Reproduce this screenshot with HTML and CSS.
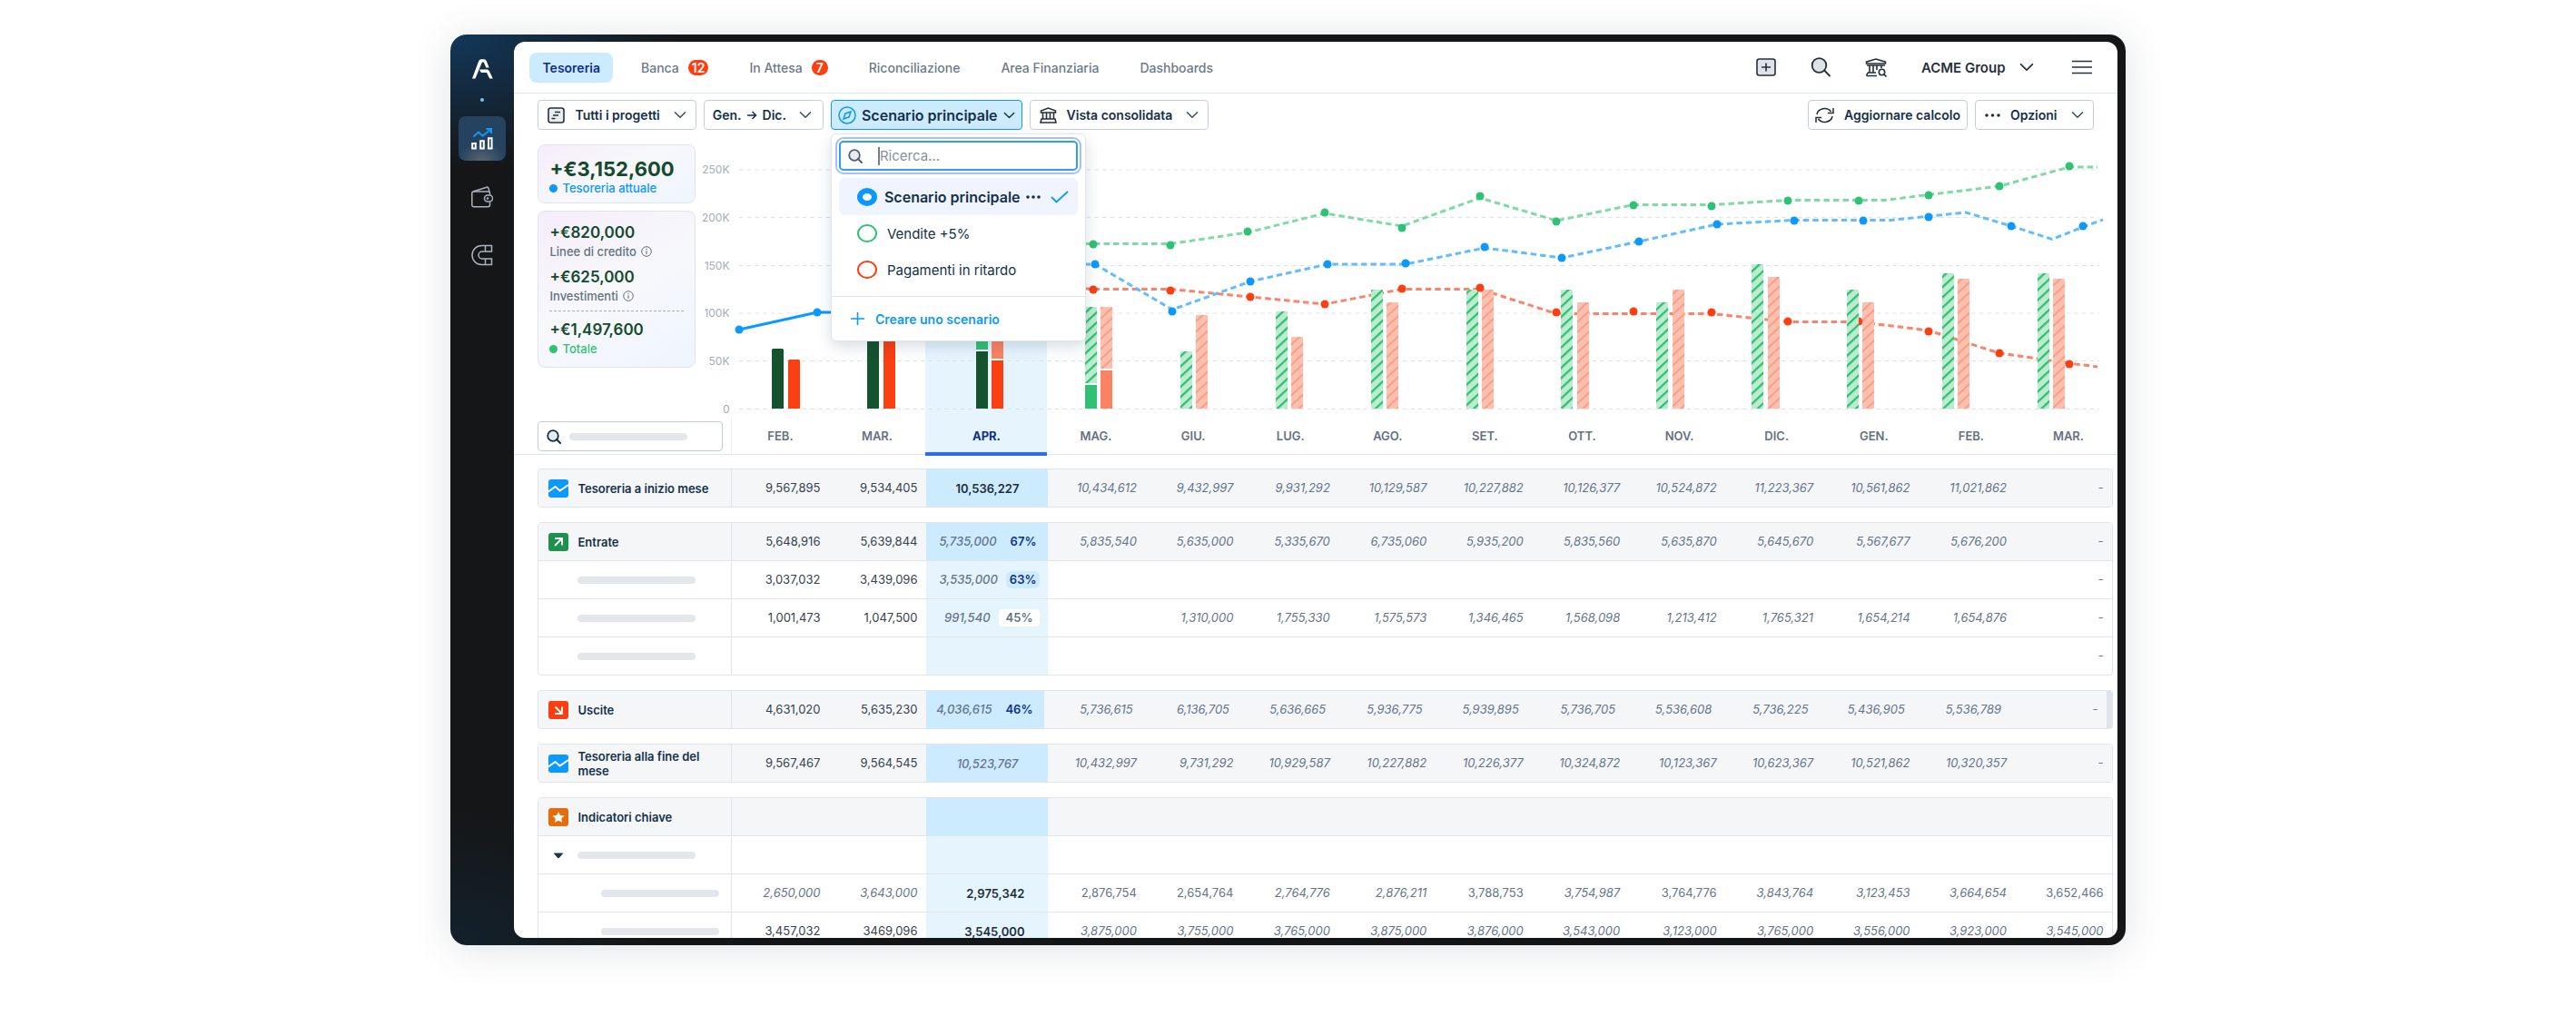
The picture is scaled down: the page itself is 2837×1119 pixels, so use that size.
FILE: index.html
```html
<!DOCTYPE html>
<html lang="it">
<head>
<meta charset="utf-8">
<title>Tesoreria</title>
<link rel="stylesheet" href="styles.css">
</head>
<body>
<svg class="defs" width="0" height="0" aria-hidden="true">
  <defs>
    <symbol id="chevron" viewBox="0 0 15 9"><path d="M1.500 1.500 7.500 7.500l6-6" fill="none" stroke="currentColor" stroke-width="1.600" stroke-linecap="round" stroke-linejoin="round"/></symbol>
    <symbol id="search" viewBox="0 0 22 22"><circle cx="9.500" cy="9" r="7.800" fill="#dfe3e7" stroke="currentColor" stroke-width="1.800"/><path d="M15.200 14.500 21 20.500" stroke="currentColor" stroke-width="1.800" stroke-linecap="round"/></symbol>
    <symbol id="search-small" viewBox="0 0 16 16"><circle cx="7" cy="7" r="5.800" fill="#e8ebee" stroke="currentColor" stroke-width="1.800"/><path d="m11 11 4 4" stroke="currentColor" stroke-width="1.900" stroke-linecap="round"/></symbol>
    <symbol id="info" viewBox="0 0 12 12"><circle cx="6" cy="6" r="5.300" fill="none" stroke="currentColor"/><path d="M6 5.300v3.400M6 3v1" stroke="currentColor" stroke-width="1.200"/></symbol>
    <symbol id="trend" viewBox="0 0 22 20"><rect width="22" height="20" rx="3" fill="#0b98ff"/><path d="M0 13.500 7.500 8l5 4.500L22 6" fill="none" stroke="#fff" stroke-width="2"/></symbol>
  </defs>
</svg>

<div class="device">
  <nav class="sidebar" aria-label="Principale">
    <svg class="logo" viewBox="0 0 23 22" aria-label="Agicap"><path d="M0 21.500 7.200 2.200Q8 .3 10 .3h3q2 0 2.800 1.900L18.600 9.500h-3.300L12.800 3.500h-1.900L3.500 21.500ZM8.200 11.500h8q1.700 0 2.500 1.600l4.100 8.400h-3.600L16 14.900H10.500Q9.300 14.700 8.900 13.700Z" fill="#fff"/></svg>
    <span class="dot"></span>
    <a class="side-item active" href="#" aria-label="Tesoreria">
      <svg viewBox="0 0 24 24" fill="none"><path d="M2.500 9.500 8 4.500l4.500 4.200L21.500 1.500M16.500 1h5.500v5" stroke="#1496ff" stroke-width="2"/><path d="M1.200 17h3.600v5.600H1.200zM10.200 14.200h3.600v8.400h-3.600zM19 11.200h3.600v11.400H19z" stroke="#fff" stroke-width="2"/></svg>
    </a>
    <a class="side-item" href="#" aria-label="Portafoglio">
      <svg viewBox="0 0 24 24" fill="none" stroke="#a9b4be" stroke-width="1.500"><path d="M20.500 9.500V8q0-2-2-2H2.500Q.8 6 .8 8v12.500q0 2.300 2.200 2.300h15.500q2 0 2-2v-3"/><path d="M2 6 17 1.200q1.500-.4 2 1.200L20 6"/><rect x="14.500" y="10" width="9" height="7" rx="3.500"/><circle cx="18" cy="13.500" r=".6"/></svg>
    </a>
    <a class="side-item" href="#" aria-label="Magnete">
      <svg viewBox="0 0 24 24" fill="none" stroke="#a9b4be" stroke-width="1.500"><path d="M22.500 1.500h-11a10.500 10.500 0 0 0 0 21h11v-6.500H12a4 4 0 0 1 0-8h10.500zM15.500 1.500V8M15.500 16v6.500"/></svg>
    </a>
  </nav>

  <main class="screen">
    <header class="topbar">
      <nav class="tabs" aria-label="Sezioni">
        <a class="tab current" href="#">Tesoreria</a>
        <a class="tab" href="#">Banca <span class="count">12</span></a>
        <a class="tab" href="#">In Attesa <span class="count">7</span></a>
        <a class="tab" href="#">Riconciliazione</a>
        <a class="tab" href="#">Area Finanziaria</a>
        <a class="tab" href="#">Dashboards</a>
      </nav>
      <div class="actions">
        <button class="icon-btn" aria-label="Aggiungi"><svg width="22" height="20" viewBox="0 0 22 20"><rect x="1" y="1" width="20" height="18" rx="2.500" fill="#dfe3e7" stroke="currentColor" stroke-width="1.600"/><path d="M11 5.500v9M6 10h10" stroke="currentColor" stroke-width="1.600"/></svg></button>
        <button class="icon-btn" aria-label="Cerca"><svg width="22" height="22"><use href="#search"/></svg></button>
        <button class="icon-btn" aria-label="Banche"><svg width="24" height="21" viewBox="0 0 24 21" fill="none" stroke="currentColor" stroke-width="1.600"><path d="M1.500 6V4.200L12 1l10.500 3.200V6zM2 8h20M5 8v8M9 8v8M13 8v5M18 8v3M3 16h9M1.500 19.500H13M3 16l-1.500 3.500"/><circle cx="18.500" cy="15.500" r="3.200"/><path d="m21 18 2.500 2.500"/></svg></button>
        <button class="account">ACME Group <svg width="16" height="10"><use href="#chevron"/></svg></button>
        <button class="icon-btn" aria-label="Menu"><svg width="22" height="16" viewBox="0 0 22 16"><path d="M0 1.500h22M0 8h22M0 14.500h22" stroke="currentColor" stroke-width="1.600"/></svg></button>
      </div>
    </header>

    <div class="toolbar">
      <button class="btn projects"><svg width="19" height="18" viewBox="0 0 19 18"><rect x="1" y="1" width="17" height="16" rx="2.500" fill="#e9ecef" stroke="#25303b" stroke-width="1.600"/><path d="M8 5.500h6M6 9h6M4.500 12.500h4" stroke="#25303b" stroke-width="1.500"/></svg>Tutti i progetti<svg class="chev" width="14" height="9"><use href="#chevron"/></svg></button>
      <button class="btn period">Gen. <svg width="11" height="10" viewBox="0 0 11 10"><path d="M0 5h9.500M5.500 1l4 4-4 4" fill="none" stroke="currentColor" stroke-width="1.500"/></svg> Dic.<svg class="chev" width="14" height="9"><use href="#chevron"/></svg></button>
      <div class="scenario">
        <button class="btn scenario-btn" aria-expanded="true"><svg width="20" height="20" viewBox="0 0 20 20" fill="none" stroke="#0b98ff" stroke-width="1.500"><circle cx="10" cy="10" r="9"/><path d="m14 6-1.800 5.800L6 14l1.800-5.800z"/></svg>Scenario principale<svg width="13" height="8"><use href="#chevron"/></svg></button>
        <div class="popup">
          <label class="popup-search"><svg width="16" height="16"><use href="#search-small"/></svg><span class="caret"></span><input type="text" placeholder="Ricerca..." aria-label="Ricerca"></label>
          <div class="options">
            <label class="option selected"><input class="blue" type="radio" name="scenario" checked>Scenario principale<svg width="16" height="4" viewBox="0 0 16 4" fill="#143049"><circle cx="2" cy="2" r="1.800"/><circle cx="8" cy="2" r="1.800"/><circle cx="14" cy="2" r="1.800"/></svg><svg class="tick" width="20" height="14" viewBox="0 0 20 14"><path d="m1 7 5.500 5.500L19 1" fill="none" stroke="#0b98ff" stroke-width="1.800"/></svg></label>
            <label class="option"><input class="green" type="radio" name="scenario">Vendite +5%</label>
            <label class="option"><input class="red" type="radio" name="scenario">Pagamenti in ritardo</label>
          </div>
          <button class="create"><svg width="15" height="14" viewBox="0 0 15 14"><path d="M7.500 0v14M0 7h15" stroke="currentColor" stroke-width="1.600"/></svg>Creare uno scenario</button>
        </div>
      </div>
      <button class="btn view"><svg width="19" height="18" viewBox="0 0 19 18" fill="none" stroke="#25303b" stroke-width="1.600"><path d="M1.500 6V4L9.500 1l8 3v2zM3.500 6v7M7.500 6v7M11.500 6v7M15.500 6v7M2 13h15l1 4H1z"/></svg>Vista consolidata<svg class="chev" width="14" height="9"><use href="#chevron"/></svg></button>
      <button class="btn refresh"><svg width="21" height="18" viewBox="0 0 21 18" fill="none" stroke="#25303b" stroke-width="1.500"><path d="M2 8a8.500 7.500 0 0 1 15.500-3M20 1v5.500h-6M19 10a8.500 7.500 0 0 1-15.500 3M1 17v-5.500h6"/></svg>Aggiornare calcolo</button>
      <button class="btn more"><svg width="17" height="4" viewBox="0 0 17 4" fill="#25303b"><circle cx="2" cy="2" r="1.800"/><circle cx="8.500" cy="2" r="1.800"/><circle cx="15" cy="2" r="1.800"/></svg>Opzioni<svg class="chev" width="14" height="9"><use href="#chevron"/></svg></button>
    </div>

    <section class="chart">
      <div class="cards">
        <div class="card">
          <div class="total">+€3,152,600</div>
          <div class="legend blue"><i></i>Tesoreria attuale</div>
        </div>
        <div class="card tall">
          <div class="amount">+€820,000</div>
          <div class="note">Linee di credito <svg width="12" height="12"><use href="#info"/></svg></div>
          <div class="amount next">+€625,000</div>
          <div class="note">Investimenti <svg width="12" height="12"><use href="#info"/></svg></div>
          <hr>
          <div class="amount">+€1,497,600</div>
          <div class="legend green"><i></i>Totale</div>
        </div>
      </div>
      <div class="scale"><span>250K</span><span>200K</span><span>150K</span><span>100K</span><span>50K</span><span>0</span></div>
      <svg class="plot" viewBox="805 143 1526 317" role="img" aria-label="Andamento della tesoreria">
        <defs>
          <pattern id="hatch-green" width="8.200" height="8.200" patternUnits="userSpaceOnUse" patternTransform="rotate(-43)"><rect width="9" height="9" fill="#bdebcf"/><rect width="9" height="2.200" fill="#26c16d"/></pattern>
          <pattern id="hatch-red" width="8.200" height="8.200" patternUnits="userSpaceOnUse" patternTransform="rotate(-43)"><rect width="9" height="9" fill="#fdc0ae"/><rect width="9" height="1.900" fill="#fc9c85"/></pattern>
        </defs>
        <rect x="1019" y="150" width="134" height="310" fill="#e6f4fe"/>
        <path class="grid" d="M814 187H2312M814 239.500H2312M814 292.500H2312M814 345H2312M814 397.500H2312M814 450.500H2312"/>
        <g fill="none" stroke-width="3" stroke-dasharray="6.500 4">
          <path stroke="#fc836a" d="M1100 310 1204 318.500H1289L1377 327 1459 335 1544 318.500H1630L1714 345.500H1885L1969 354.500H2047L2124 364 2202 389 2279 400 2310 404"/>
          <path stroke="#7fdaa5" d="M1100 268.500H1289L1374 256 1459 235 1544 249 1630 218 1714 243 1799 225.500H1885L1969 220.500H2075L2202 205 2279 184H2310"/>
          <path stroke="#62bcff" d="M1100 291H1206L1291 341 1377 310 1462 291H1548L1635 273 1720 284 1805 266 1891 247 1976 242.500H2082L2165 234 2215 249 2260 263.500 2294 250 2316 242"/>
        </g>
        <path d="M814 363 900 344H1000" fill="none" stroke="#0b98ff" stroke-width="3"/>
        <g fill="#0b98ff"><circle cx="814" cy="363" r="4.500"/><circle cx="900" cy="344" r="4.500"/><circle cx="1206" cy="291" r="4.500"/><circle cx="1291" cy="343" r="4.500"/><circle cx="1377" cy="310" r="4.500"/><circle cx="1462" cy="291" r="4.500"/><circle cx="1548" cy="290" r="4.500"/><circle cx="1635" cy="272" r="4.500"/><circle cx="1720" cy="284" r="4.500"/><circle cx="1805" cy="266" r="4.500"/><circle cx="1891" cy="247" r="4.500"/><circle cx="1976" cy="243" r="4.500"/><circle cx="2052" cy="243" r="4.500"/><circle cx="2124" cy="239" r="4.500"/><circle cx="2215" cy="249" r="4.500"/><circle cx="2294" cy="249" r="4.500"/></g>
        <g fill="#30c274"><circle cx="1204" cy="269" r="4.500"/><circle cx="1289" cy="270" r="4.500"/><circle cx="1374" cy="255" r="4.500"/><circle cx="1459" cy="234" r="4.500"/><circle cx="1544" cy="251" r="4.500"/><circle cx="1630" cy="216" r="4.500"/><circle cx="1714" cy="244" r="4.500"/><circle cx="1799" cy="226" r="4.500"/><circle cx="1885" cy="227" r="4.500"/><circle cx="1969" cy="221" r="4.500"/><circle cx="2047" cy="221" r="4.500"/><circle cx="2124" cy="215" r="4.500"/><circle cx="2202" cy="205" r="4.500"/><circle cx="2279" cy="183" r="4.500"/></g>
        <g fill="#fa3f12"><circle cx="1204" cy="319" r="4.500"/><circle cx="1289" cy="320" r="4.500"/><circle cx="1377" cy="327" r="4.500"/><circle cx="1459" cy="335" r="4.500"/><circle cx="1544" cy="318" r="4.500"/><circle cx="1714" cy="344" r="4.500"/><circle cx="1799" cy="343" r="4.500"/><circle cx="1885" cy="344" r="4.500"/><circle cx="1969" cy="354" r="4.500"/><circle cx="2047" cy="354" r="4.500"/><circle cx="2124" cy="365" r="4.500"/><circle cx="2202" cy="389" r="4.500"/></g>
        <g fill="#14532e"><path d="M850 450V385.500q0-1.500 1.500-1.500h10q1.500 0 1.500 1.500V450zM955 360h13v90h-13zM1075 387h13v63h-13z"/></g>
        <g fill="#fa3f12"><path d="M868 450V397.500q0-1.500 1.500-1.500h10q1.500 0 1.500 1.500V450zM973 360h13v90h-13zM1092 397h13v53h-13z"/></g>
        <path fill="#30c274" d="M1075 340h13v45h-13zM1195 424h13v26h-13z"/>
        <path fill="#fb8263" d="M1092 340h13v55h-13zM1212 408h13v42h-13z"/>
        <path fill="#fff" d="M1075 385h13v2h-13zM1092 395h13v2h-13z"/>
        <g fill="url(#hatch-green)"><rect x="1195" y="338" width="13" height="84" rx="1"/><rect x="1300" y="387" width="13" height="63" rx="1"/><rect x="1405" y="343" width="13" height="107" rx="1"/><rect x="1510" y="319" width="13" height="131" rx="1"/><rect x="1615" y="319" width="13" height="131" rx="1"/><rect x="1719" y="319" width="13" height="131" rx="1"/><rect x="1824" y="333" width="13" height="117" rx="1"/><rect x="1929" y="291" width="13" height="159" rx="1"/><rect x="2034" y="319" width="13" height="131" rx="1"/><rect x="2139" y="301" width="13" height="149" rx="1"/><rect x="2244" y="301" width="13" height="149" rx="1"/></g>
        <g fill="url(#hatch-red)"><rect x="1212" y="338" width="13" height="68" rx="1"/><rect x="1317" y="347" width="13" height="103" rx="1"/><rect x="1422" y="371" width="13" height="79" rx="1"/><rect x="1527" y="333" width="13" height="117" rx="1"/><rect x="1632" y="319" width="13" height="131" rx="1"/><rect x="1737" y="333" width="13" height="117" rx="1"/><rect x="1842" y="319" width="13" height="131" rx="1"/><rect x="1947" y="305" width="13" height="145" rx="1"/><rect x="2051" y="333" width="13" height="117" rx="1"/><rect x="2156" y="307" width="13" height="143" rx="1"/><rect x="2261" y="307" width="13" height="143" rx="1"/></g>
        <g fill="#fa3f12"><circle cx="1630" cy="317" r="4.500"/><circle cx="2279" cy="401" r="4.500"/></g>
      </svg>
    </section>

    <div class="months">
      <div class="filter"><label class="filter-box"><svg width="16" height="16"><use href="#search-small"/></svg><span class="bone"></span><input type="search" aria-label="Filtra"></label></div>
      <span class="month first">FEB.</span><span class="month">MAR.</span><span class="month now">APR.</span><span class="month">MAG.</span><span class="month">GIU.</span><span class="month">LUG.</span><span class="month">AGO.</span><span class="month">SET.</span><span class="month">OTT.</span><span class="month">NOV.</span><span class="month">DIC.</span><span class="month">GEN.</span><span class="month">FEB.</span><span class="month">MAR.</span>
    </div>

    <div class="groups">
      <div class="group">
        <table>
          <tr class="head"><th scope="row"><span class="name"><svg width="22" height="20"><use href="#trend"/></svg>Tesoreria a inizio mese</span></th><td>9,567,895</td><td>9,534,405</td><td class="sum">10,536,227</td><td>10,434,612</td><td>9,432,997</td><td>9,931,292</td><td>10,129,587</td><td>10,227,882</td><td>10,126,377</td><td>10,524,872</td><td>11,223,367</td><td>10,561,862</td><td>11,021,862</td><td>-</td></tr>
        </table>
      </div>

      <div class="group">
        <table>
          <tr class="head"><th scope="row"><span class="name"><svg width="22" height="20" viewBox="0 0 22 20"><rect width="22" height="20" rx="3" fill="#1d924f"/><path d="M7 6h8v7.500M14.500 6.500 7 14" fill="none" stroke="#fff" stroke-width="1.800"/></svg>Entrate</span></th><td>5,648,916</td><td>5,639,844</td><td>5,735,000<b class="rate">67%</b></td><td>5,835,540</td><td>5,635,000</td><td>5,335,670</td><td>6,735,060</td><td>5,935,200</td><td>5,835,560</td><td>5,635,870</td><td>5,645,670</td><td>5,567,677</td><td>5,676,200</td><td>-</td></tr>
          <tr><th scope="row"><span class="bone"></span></th><td>3,037,032</td><td>3,439,096</td><td>3,535,000<b class="rate tint">63%</b></td><td></td><td></td><td></td><td></td><td></td><td></td><td></td><td></td><td></td><td></td><td>-</td></tr>
          <tr><th scope="row"><span class="bone"></span></th><td>1,001,473</td><td>1,047,500</td><td>991,540<b class="rate low">45%</b></td><td></td><td>1,310,000</td><td>1,755,330</td><td>1,575,573</td><td>1,346,465</td><td>1,568,098</td><td>1,213,412</td><td>1,765,321</td><td>1,654,214</td><td>1,654,876</td><td>-</td></tr>
          <tr><th scope="row"><span class="bone"></span></th><td></td><td></td><td></td><td></td><td></td><td></td><td></td><td></td><td></td><td></td><td></td><td></td><td></td><td>-</td></tr>
        </table>
      </div>

      <div class="group scrolled">
        <table>
          <tr class="head"><th scope="row"><span class="name"><svg width="22" height="20" viewBox="0 0 22 20"><rect width="22" height="20" rx="3" fill="#fa3f12"/><path d="M7 14h8V6.500M14.500 13.500 7.500 6.500" fill="none" stroke="#fff" stroke-width="1.800"/></svg>Uscite</span></th><td>4,631,020</td><td>5,635,230</td><td>4,036,615<b class="rate">46%</b></td><td>5,736,615</td><td>6,136,705</td><td>5,636,665</td><td>5,936,775</td><td>5,939,895</td><td>5,736,705</td><td>5,536,608</td><td>5,736,225</td><td>5,436,905</td><td>5,536,789</td><td>-</td></tr>
        </table>
      </div>

      <div class="group">
        <table>
          <tr class="head"><th scope="row"><span class="name"><svg width="22" height="20"><use href="#trend"/></svg>Tesoreria alla fine del mese</span></th><td>9,567,467</td><td>9,564,545</td><td class="centered">10,523,767</td><td>10,432,997</td><td>9,731,292</td><td>10,929,587</td><td>10,227,882</td><td>10,226,377</td><td>10,324,872</td><td>10,123,367</td><td>10,623,367</td><td>10,521,862</td><td>10,320,357</td><td>-</td></tr>
        </table>
      </div>

      <div class="group">
        <table>
          <tr class="head"><th scope="row"><span class="name"><svg width="22" height="20" viewBox="0 0 22 20"><rect width="22" height="20" rx="3" fill="#e46c0a"/><path d="m11 4 2 4 4.500.5-3.200 3 .8 4.300L11 13.700l-4.100 2.100.8-4.300-3.200-3L9 8z" fill="#fff"/></svg>Indicatori chiave</span></th><td></td><td></td><td></td><td></td><td></td><td></td><td></td><td></td><td></td><td></td><td></td><td></td><td></td><td></td></tr>
          <tr><th scope="row"><span class="name"><svg width="22" height="20" viewBox="0 0 22 20"><path d="M6.500 7.500h9q.8 0 .3.800l-3.600 4.200q-1.200 1-2.400 0L6.200 8.300q-.5-.8.300-.8z" fill="#163551"/></svg><i class="bone"></i></span></th><td></td><td></td><td></td><td></td><td></td><td></td><td></td><td></td><td></td><td></td><td></td><td></td><td></td><td></td></tr>
          <tr><th scope="row"><span class="bone deep"></span></th><td class="est">2,650,000</td><td class="est">3,643,000</td><td class="sum kpi">2,975,342</td><td class="firm">2,876,754</td><td class="firm">2,654,764</td><td>2,764,776</td><td>2,876,211</td><td class="firm">3,788,753</td><td>3,754,987</td><td class="firm">3,764,776</td><td>3,843,764</td><td>3,123,453</td><td>3,664,654</td><td class="firm">3,652,466</td></tr>
          <tr><th scope="row"><span class="bone deep"></span></th><td>3,457,032</td><td>3469,096</td><td class="sum kpi">3,545,000</td><td>3,875,000</td><td>3,755,000</td><td>3,765,000</td><td>3,875,000</td><td>3,876,000</td><td>3,543,000</td><td>3,123,000</td><td>3,765,000</td><td>3,556,000</td><td>3,923,000</td><td>3,545,000</td></tr>
        </table>
      </div>
    </div>
  </main>
</div>
</body>
</html>
```

FILE: styles.css
```css
* { box-sizing: border-box; }

body {
  margin: 0;
  height: 100vh;
  padding: 38px 0 78px;
  background: #fff;
  font-family: Inter, "Liberation Sans", sans-serif;
  font-size: 14px;
  color: #143049;
}

button, input { font: inherit; color: inherit; }
button { cursor: pointer; }
a { color: inherit; text-decoration: none; }
.defs { position: absolute; }

.device {
  width: 65%;
  height: 100%;
  margin: 0 auto;
  padding: 8px 9px 8px 0;
  display: flex;
  border-radius: 18px;
  background:
    radial-gradient(260px 150px at 0 0, #12385a, transparent),
    radial-gradient(220px 150px at 0 100%, #13212c, transparent),
    #151617;
  box-shadow: 0 4px 44px rgba(60, 75, 95, .16);
}

/* Sidebar */
.sidebar {
  flex: none;
  width: 70px;
  padding-top: 19px;
  display: flex;
  flex-direction: column;
  align-items: center;
}
.logo { width: 23px; height: 22px; }
.dot { width: 4px; height: 4px; margin: 21px 0 16px; border-radius: 50%; background: #6fc4ff; }
.side-item {
  width: 52px;
  height: 49px;
  margin-bottom: 15px;
  display: grid;
  place-items: center;
  border-radius: 8px;
}
.side-item.active { background: radial-gradient(26px 20px at 50% 100%, #5a6470, #25435f); }
.side-item svg { width: 24px; height: 24px; }

/* Screen */
.screen {
  flex: 1;
  min-width: 0;
  overflow: hidden;
  border-radius: 12px;
  background: #fff;
}
.topbar {
  height: 57px;
  padding: 0 28px 0 17px;
  display: flex;
  align-items: center;
  justify-content: space-between;
  border-bottom: 1px solid #e0e7ee;
}
.tabs { display: flex; align-items: center; gap: 17px; }
.tab {
  height: 33px;
  padding: 0 14px;
  display: flex;
  align-items: center;
  gap: 10px;
  border-radius: 8px;
  font-weight: 500;
  color: #6c7987;
}
.tab.current { background: #cdebff; color: #0d3187; font-weight: 600; }
.count {
  min-width: 18px;
  padding: 0 4px;
  border-radius: 9px;
  background: #fa3f12;
  color: #fff;
  line-height: 17px;
  font-weight: 600;
  text-align: center;
}
.actions { display: flex; align-items: center; gap: 38px; color: #25303b; }
.icon-btn, .account { padding: 0; border: 0; background: none; display: flex; align-items: center; color: inherit; }
.account { gap: 15px; margin-right: 4px; font-size: 15px; font-weight: 600; }

/* Toolbar */
.toolbar {
  padding: 7px 26px 0;
  display: flex;
  align-items: center;
  gap: 8px;
}
.btn {
  height: 33px;
  padding: 0 10px;
  display: flex;
  align-items: center;
  gap: 11px;
  border: 1px solid #c6ced6;
  border-radius: 4px;
  background: #fff;
  font-weight: 600;
  color: #143049;
  white-space: nowrap;
}
.chev { margin-left: 4px; color: #3a4c5e; }
.period { gap: 6px; padding: 0 12px 0 9px; }
.period .chev { margin-left: 8px; }
.refresh { margin-left: auto; padding: 0 7px; }
.scenario { position: relative; }
.scenario-btn {
  padding: 0 7px;
  gap: 6px;
  background: #cdebff;
  border-color: #1496ff;
  font-size: 16px;
}
.popup {
  position: absolute;
  z-index: 2;
  top: 37px;
  left: 0;
  width: 281px;
  border: 1px solid #e1e6eb;
  border-radius: 6px;
  background: #fff;
  box-shadow: 0 6px 16px rgba(20, 48, 73, .16);
}
.popup-search {
  height: 33px;
  margin: 7px 8px 8px;
  padding: 0 8px;
  display: flex;
  align-items: center;
  border: 2px solid #2f9df5;
  border-radius: 5px;
  box-shadow: 0 0 0 2px #fff, 0 0 0 4px #a9bffa;
  color: #4f6070;
}
.caret { width: 2px; height: 20px; margin-left: 17px; background: #6f7f8e; }
.popup-search input { flex: 1; min-width: 0; padding: 0; border: 0; outline: 0; background: none; font-size: 15px; }
.popup-search input::placeholder { color: #8592a0; opacity: 1; }
.options { margin: 0 8px 9px; }
.option {
  height: 40px;
  padding: 0 10px 0 20px;
  display: flex;
  align-items: center;
  gap: 11px;
  border-radius: 6px;
  font-size: 15px;
  white-space: nowrap;
}
.option.selected { height: 41px; gap: 6px; background: #eff4fe; font-size: 16px; font-weight: 600; }
.tick { margin-left: auto; }
.option input {
  appearance: none;
  flex: none;
  width: 22px;
  height: 20px;
  margin: 0;
  border: 2px solid #0b98ff;
  border-radius: 50%;
  background: #fff;
}
.option input.green { border-color: #30c274; }
.option input.red { border-color: #fa3f12; }
.option input:checked { border-width: 6px; margin-right: 2px; }
.create {
  width: 100%;
  height: 49px;
  padding: 0 21px;
  display: flex;
  align-items: center;
  gap: 12px;
  border: 0;
  border-top: 1px solid #e1e6eb;
  background: none;
  color: #0b98ff;
  font-weight: 600;
}

/* Chart */
.chart { padding-left: 26px; display: flex; }
.cards { flex: none; width: 174px; padding-top: 16px; }
.card {
  height: 65px;
  padding: 14px 12px 0;
  border: 1px solid #dfe5ec;
  border-radius: 8px;
  background: linear-gradient(150deg, #f6edfb, #f7f8fc 50%, #eff5fe);
}
.card.tall { height: 173px; margin-top: 8px; padding-top: 12px; }
.total { font-size: 22px; font-weight: 700; line-height: 24px; color: #14492c; }
.amount { font-size: 17px; font-weight: 600; line-height: 23px; color: #14492c; }
.amount.next { margin-top: 8px; }
.legend, .note { font-size: 13px; line-height: 18px; display: flex; align-items: center; gap: 5px; font-weight: 500; color: #64727f; }
.legend i { width: 9px; height: 9px; border-radius: 50%; background: currentColor; }
.legend.blue { color: #0b98ff; }
.legend.green { color: #30c274; }
.card hr { margin: 7px 0 9px; border: 0; border-top: 1px dashed #aab3bc; }
.scale {
  flex: none;
  width: 39px;
  height: 279px;
  margin-top: 36px;
  padding-right: 2px;
  display: flex;
  flex-direction: column;
  justify-content: space-between;
  text-align: right;
  font-size: 12px;
  line-height: 15px;
  color: #a3adb7;
}
.plot { flex: 1; min-width: 0; display: block; }
.grid { fill: none; stroke: #dfe2e5; stroke-dasharray: 4.500 4.200; }

/* Month axis */
.months {
  height: 41px;
  padding-left: 26px;
  display: grid;
  grid-template-columns: 213px 107px 107px 134px repeat(11, 1fr);
  border-bottom: 1px solid #e0e5ea;
}
.filter { padding-top: 4px; }
.filter-box {
  width: 204px;
  height: 33px;
  padding: 0 9px;
  display: flex;
  align-items: center;
  gap: 9px;
  border: 1px solid #c3cbd3;
  border-radius: 4px;
}
.filter-box input { flex: 1; width: 0; min-width: 0; padding: 0; border: 0; outline: 0; background: none; }
.month { font-size: 13px; font-weight: 600; line-height: 40px; text-align: center; color: #64727f; }
.month.first { border-left: 1px solid #eef0f2; }
.month.now { line-height: 36px; padding-top: 2px; background: #e6f4fe; border-bottom: 4px solid #2f6bf0; color: #0d3187; font-weight: 700; }

.bone { display: block; flex: none; width: 130px; height: 8px; border-radius: 4px; background: #e3e7eb; }

/* Data groups */
.groups { padding: 15px 5px 0 26px; display: flex; flex-direction: column; gap: 16px; }
.group { border: 1px solid #e1e5e9; border-radius: 4px; overflow: hidden; }
.group.scrolled { border-right: 7px solid #e1e3ea; }
table { width: 100%; table-layout: fixed; border-collapse: separate; border-spacing: 0; }
th, td { height: 42px; padding: 0; vertical-align: middle; border-bottom: 1px solid #e1e5e9; }
tr:last-child th, tr:last-child td { height: 41px; border-bottom: 0; }
th { width: 213px; padding-left: 11px; text-align: left; border-right: 1px solid #e1e5e9; }
td {
  padding-right: 9px;
  padding-bottom: 2px;
  text-align: right;
  font-size: 13px;
  font-style: italic;
  color: #64748a;
  white-space: nowrap;
}
td:nth-child(2), td:nth-child(3) { width: 107px; padding-right: 10px; font-style: normal; color: #35424f; }
td:nth-child(4) { width: 134px; padding-bottom: 0; background: #e6f4fe; font-weight: 500; }
.scrolled td:nth-child(4) { width: 130px; }
.head { background: #f4f6f8; }
.head td:nth-child(4) { background: #cdebff; }
td.est:nth-child(n) { font-style: italic; color: #64748a; }
td.firm { font-style: normal; }
td.sum { font-style: normal; color: #1f2d3a; }
td.sum:nth-child(4) { text-align: center; font-weight: 600; padding-right: 0; }
td.centered:nth-child(4) { text-align: center; padding-right: 0; }
td.kpi:nth-child(4) { text-align: right; padding-right: 26px; }
.name {
  display: flex;
  align-items: center;
  gap: 10px;
  font-size: 13px;
  line-height: 16px;
  font-weight: 600;
}
.name svg { flex: none; }
th > .bone { margin-left: 32px; }
th > .bone.deep { margin-left: 58px; }
.rate {
  display: inline-block;
  margin-left: 9px;
  padding: 0 4px;
  border-radius: 6px;
  font-style: normal;
  font-weight: 600;
  font-size: 13px;
  line-height: 19px;
  color: #0d3187;
}
.head .rate { margin-left: 11px; }
.rate.tint { background: #cdebff; }
.rate.low { padding: 0 8px; border-radius: 4px; background: #fff; color: #64727f; }
```
